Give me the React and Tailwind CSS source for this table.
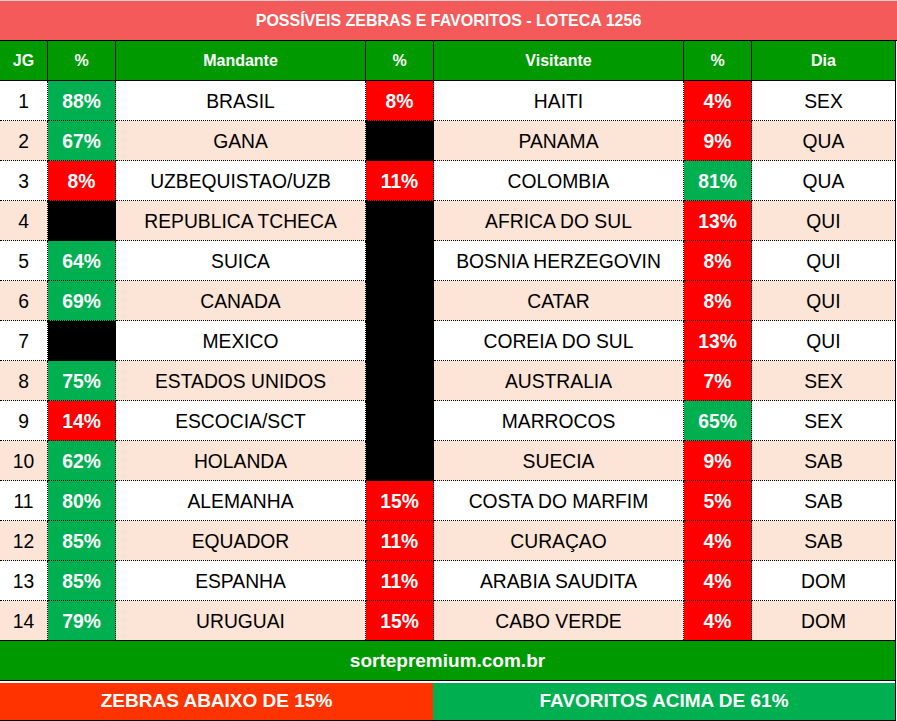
import React from "react";

const G = "g"; // green cell
const R = "r"; // red cell
const B = "b"; // black cell

const jogos = [
  {n: 1, p1: ["88%", G], casa: "BRASIL", px: ["8%", R], fora: "HAITI", p2: ["4%", R], dia: "SEX"},
  {n: 2, p1: ["67%", G], casa: "GANA", px: ["", B], fora: "PANAMA", p2: ["9%", R], dia: "QUA"},
  {n: 3, p1: ["8%", R], casa: "UZBEQUISTAO/UZB", px: ["11%", R], fora: "COLOMBIA", p2: ["81%", G], dia: "QUA"},
  {n: 4, p1: ["", B], casa: "REPUBLICA TCHECA", px: ["", B], fora: "AFRICA DO SUL", p2: ["13%", R], dia: "QUI"},
  {n: 5, p1: ["64%", G], casa: "SUICA", px: ["", B], fora: "BOSNIA HERZEGOVIN", p2: ["8%", R], dia: "QUI"},
  {n: 6, p1: ["69%", G], casa: "CANADA", px: ["", B], fora: "CATAR", p2: ["8%", R], dia: "QUI"},
  {n: 7, p1: ["", B], casa: "MEXICO", px: ["", B], fora: "COREIA DO SUL", p2: ["13%", R], dia: "QUI"},
  {n: 8, p1: ["75%", G], casa: "ESTADOS UNIDOS", px: ["", B], fora: "AUSTRALIA", p2: ["7%", R], dia: "SEX"},
  {n: 9, p1: ["14%", R], casa: "ESCOCIA/SCT", px: ["", B], fora: "MARROCOS", p2: ["65%", G], dia: "SEX"},
  {n: 10, p1: ["62%", G], casa: "HOLANDA", px: ["", B], fora: "SUECIA", p2: ["9%", R], dia: "SAB"},
  {n: 11, p1: ["80%", G], casa: "ALEMANHA", px: ["15%", R], fora: "COSTA DO MARFIM", p2: ["5%", R], dia: "SAB"},
  {n: 12, p1: ["85%", G], casa: "EQUADOR", px: ["11%", R], fora: "CURAÇAO", p2: ["4%", R], dia: "SAB"},
  {n: 13, p1: ["85%", G], casa: "ESPANHA", px: ["11%", R], fora: "ARABIA SAUDITA", p2: ["4%", R], dia: "DOM"},
  {n: 14, p1: ["79%", G], casa: "URUGUAI", px: ["15%", R], fora: "CABO VERDE", p2: ["4%", R], dia: "DOM"},
];

const cols = "grid grid-cols-[48px_68px_250px_68px_250px_68px_143px]";

const corCelula = {
  g: "bg-[#00b050]",
  r: "bg-[#ff0000]",
  b: "bg-black",
};

const Pct = ({valor, last}) => (
  <div
    className={`flex items-center justify-center pt-[3px] border-black border-dotted ${
      last ? "" : "border-b"
    } border-r font-bold text-white ${corCelula[valor[1]]}`}>
    {valor[0]}
  </div>
);

const Texto = ({children, last, noRight}) => (
  <div
    className={`flex items-center justify-center pt-[3px] border-black border-dotted ${
      last ? "" : "border-b"
    } ${noRight ? "" : "border-r"} text-black`}>
    {children}
  </div>
);

export default function App() {
  return (
    <div
      className="w-[897px] bg-white"
      style={{fontFamily: '"Liberation Sans", Arial, sans-serif'}}>
      <div className="h-[41px] border-t border-b border-t-[#d0d0d0] border-b-black bg-[#f45a5a] flex items-center justify-center text-white font-bold text-[16px]">
        POSSÍVEIS ZEBRAS E FAVORITOS - LOTECA 1256
      </div>

      <div className="w-[896px] border-r border-black">
        <div className={`${cols} h-10 border-b border-black bg-[#009900] text-white font-bold text-[16px]`}>
          <div className="flex items-center justify-center border-r border-black">JG</div>
          <div className="flex items-center justify-center border-r border-black">%</div>
          <div className="flex items-center justify-center border-r border-black">Mandante</div>
          <div className="flex items-center justify-center border-r border-black">%</div>
          <div className="flex items-center justify-center border-r border-black">Visitante</div>
          <div className="flex items-center justify-center border-r border-black">%</div>
          <div className="flex items-center justify-center">Dia</div>
        </div>

        {jogos.map((j, i) => {
          const last = i === jogos.length - 1;
          return (
            <div
              key={j.n}
              className={`${cols} ${last ? "h-[39px]" : "h-10"} text-[19.3px] ${
                i % 2 === 0 ? "bg-white" : "bg-[#fce4d6]"
              }`}>
              <Texto last={last}>{j.n}</Texto>
              <Pct valor={j.p1} last={last} />
              <Texto last={last}>{j.casa}</Texto>
              <Pct valor={j.px} last={last} />
              <Texto last={last}>{j.fora}</Texto>
              <Pct valor={j.p2} last={last} />
              <Texto last={last} noRight>
                {j.dia}
              </Texto>
            </div>
          );
        })}

        <div className="h-[41px] pt-[2px] border-t border-b border-black bg-[#009900] flex items-center justify-center text-white font-bold text-[19px]">
          sortepremium.com.br
        </div>

        <div className="h-10 pt-[2px] border-b border-black flex text-white font-bold text-[19px]">
          <div className="w-[433px] bg-[#ff3300] flex items-center justify-center">
            ZEBRAS ABAIXO DE 15%
          </div>
          <div className="flex-1 bg-[#00b050] flex items-center justify-center">
            FAVORITOS ACIMA DE 61%
          </div>
        </div>
      </div>
    </div>
  );
}
